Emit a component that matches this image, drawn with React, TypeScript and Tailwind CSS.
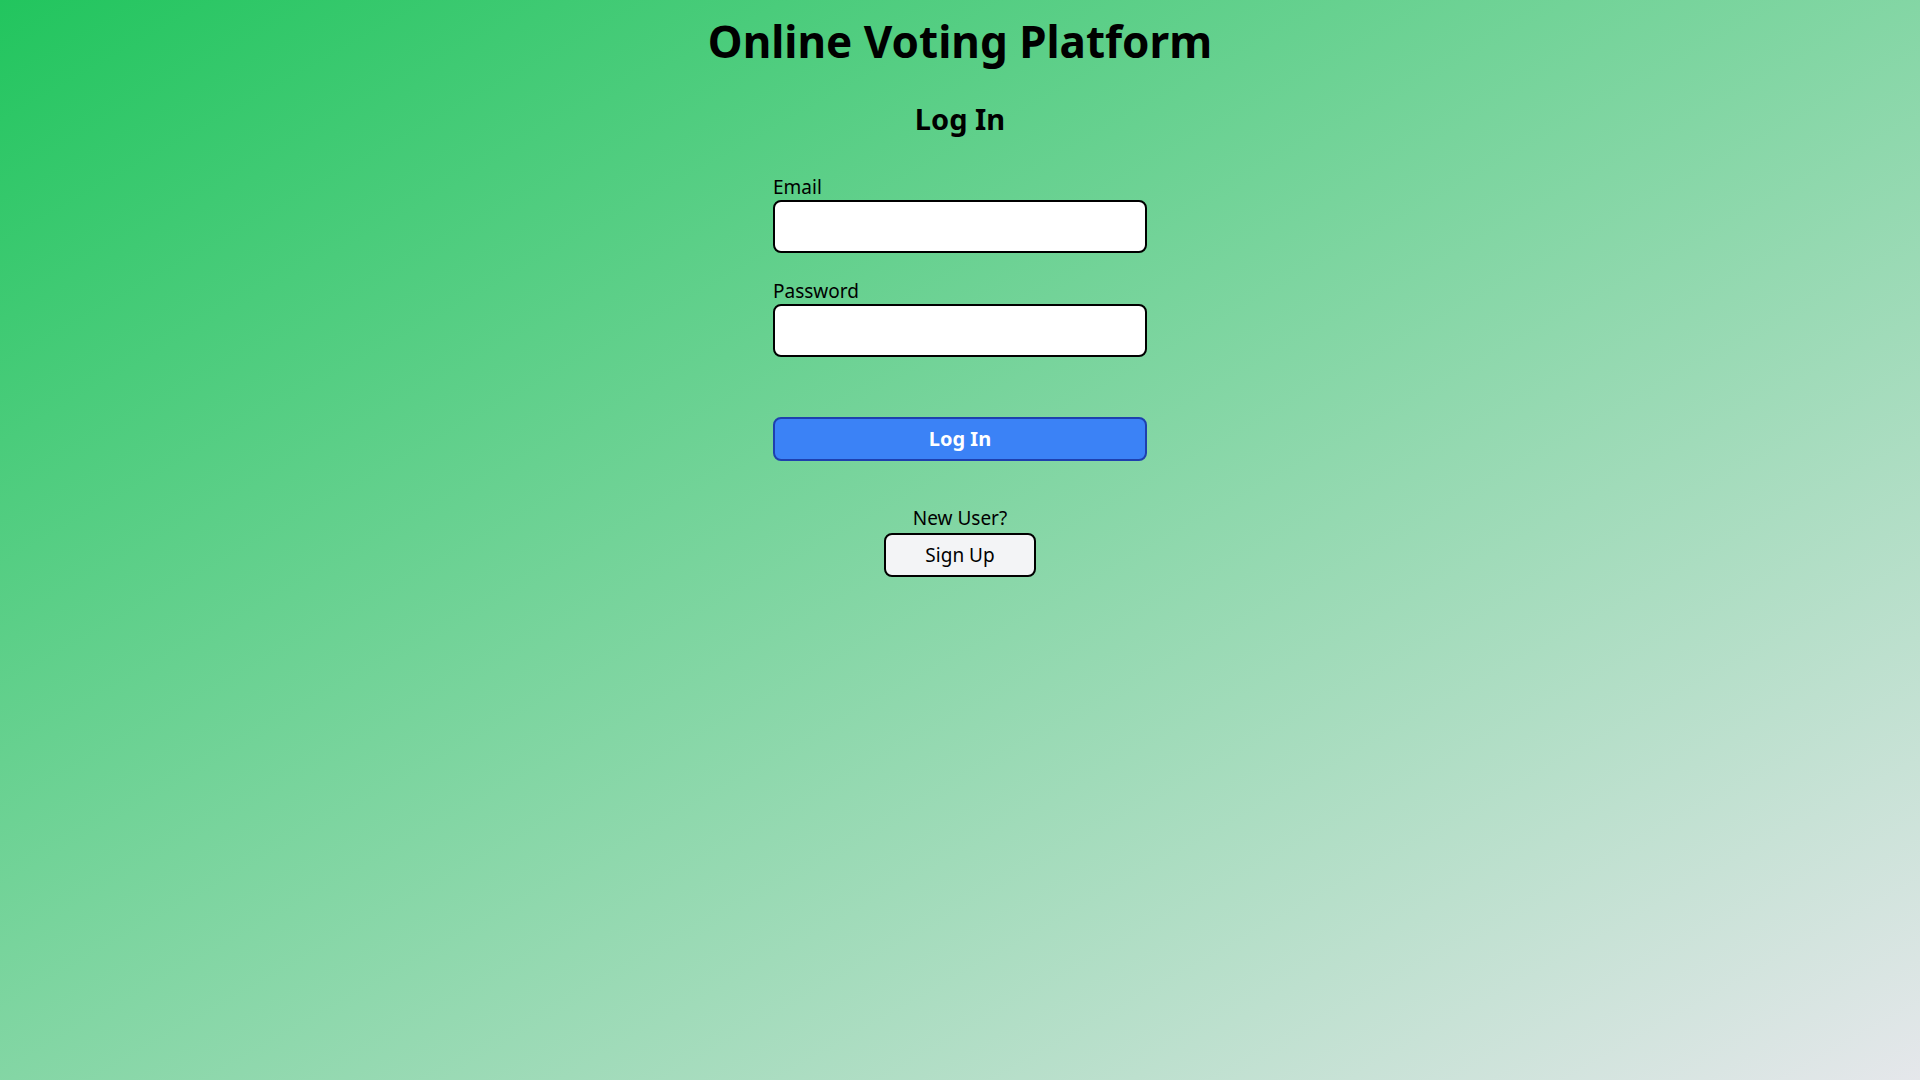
export default function App() {
  return (
    <main className="min-h-screen w-full bg-[linear-gradient(to_bottom_right,#22c55e,#e5e7eb)] font-['Noto_Sans',sans-serif] text-black">
      <div className="flex flex-col items-center pt-[17px]">
        {/* Header */}
        <h1 className="text-[44px] leading-[48px] font-bold">Online Voting Platform</h1>
        <h2 className="mt-[36px] text-[29px] leading-[36px] font-bold">Log In</h2>

        {/* Form */}
        <form className="mt-[37px] flex w-[374px] flex-col" onSubmit={(e) => e.preventDefault()}>
          <label className="text-[19px] leading-[26px]">Email</label>
          <input
            type="email"
            className="h-[53px] w-full rounded-lg border-2 border-black bg-white px-3"
          />
          <label className="mt-[25px] text-[19px] leading-[26px]">Password</label>
          <input
            type="password"
            className="h-[53px] w-full rounded-lg border-2 border-black bg-white px-3"
          />
          <button
            type="submit"
            className="mt-[60px] h-[44px] w-full rounded-lg border-2 border-[#1e40af] bg-[#3b82f6] text-xl font-bold text-white"
          >
            Log In
          </button>
        </form>

        {/* Sign up */}
        <p className="mt-[44px] text-[19px] leading-[26px]">New User?</p>
        <button className="mt-[2px] h-[44px] w-[152px] rounded-lg border-2 border-black bg-[#f3f4f6] text-[19px]">
          Sign Up
        </button>
      </div>
    </main>
  )
}
